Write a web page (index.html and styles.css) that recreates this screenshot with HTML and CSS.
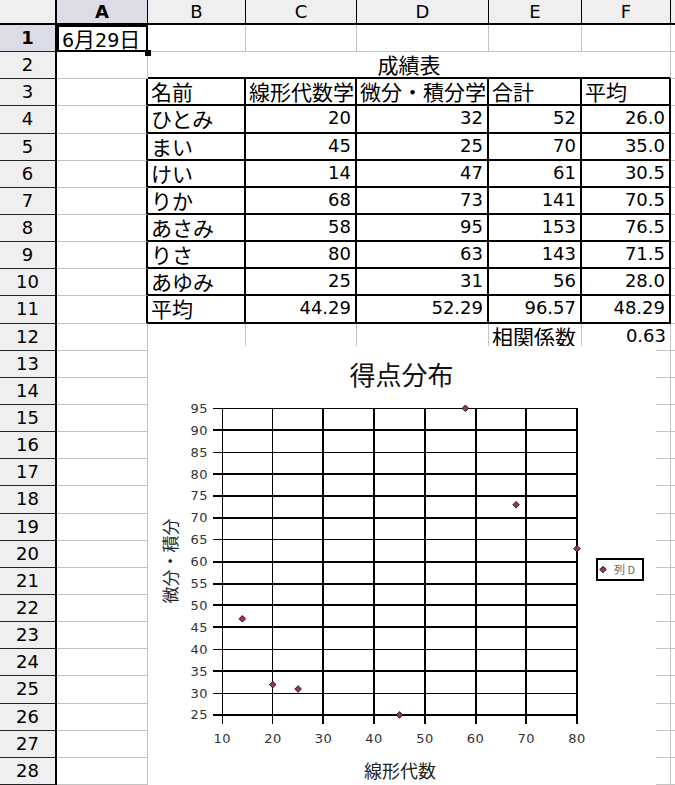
FILE: index.html
```html
<!DOCTYPE html>
<html lang="ja">
<head>
<meta charset="utf-8">
<title>成績表</title>
<link rel="stylesheet" href="styles.css">
</head>
<body>
<div class="sheet">
  <div class="grid">
    <div class="corner"></div>
    <div class="hd hd-sel">A</div><div class="hd">B</div><div class="hd">C</div><div class="hd">D</div><div class="hd">E</div><div class="hd">F</div><div class="hd hd-last"></div>

    <div class="rh rh-sel">1</div>
    <div class="c sel"><span class="n1">6</span><span class="jp">月</span><span class="n1">29</span><span class="jp">日</span></div>
    <div class="c"></div><div class="c"></div><div class="c"></div><div class="c"></div><div class="c"></div><div class="c g"></div>

    <div class="rh">2</div>
    <div class="c"></div>
    <div class="c merged jp">成績表</div>
    <div class="c g"></div>

    <div class="rh">3</div>
    <div class="c tl"></div>
    <div class="c t jp">名前</div><div class="c t jp">線形代数学</div><div class="c t jp">微分・積分学</div><div class="c t jp">合計</div><div class="c t jp">平均</div>
    <div class="c g"></div>

    <div class="rh">4</div>
    <div class="c tl"></div>
    <div class="c t jp">ひとみ</div><div class="c t n">20</div><div class="c t n">32</div><div class="c t n">52</div><div class="c t n">26.0</div>
    <div class="c g"></div>

    <div class="rh">5</div>
    <div class="c tl"></div>
    <div class="c t jp">まい</div><div class="c t n">45</div><div class="c t n">25</div><div class="c t n">70</div><div class="c t n">35.0</div>
    <div class="c g"></div>

    <div class="rh">6</div>
    <div class="c tl"></div>
    <div class="c t jp">けい</div><div class="c t n">14</div><div class="c t n">47</div><div class="c t n">61</div><div class="c t n">30.5</div>
    <div class="c g"></div>

    <div class="rh">7</div>
    <div class="c tl"></div>
    <div class="c t jp">りか</div><div class="c t n">68</div><div class="c t n">73</div><div class="c t n">141</div><div class="c t n">70.5</div>
    <div class="c g"></div>

    <div class="rh">8</div>
    <div class="c tl"></div>
    <div class="c t jp">あさみ</div><div class="c t n">58</div><div class="c t n">95</div><div class="c t n">153</div><div class="c t n">76.5</div>
    <div class="c g"></div>

    <div class="rh">9</div>
    <div class="c tl"></div>
    <div class="c t jp">りさ</div><div class="c t n">80</div><div class="c t n">63</div><div class="c t n">143</div><div class="c t n">71.5</div>
    <div class="c g"></div>

    <div class="rh">10</div>
    <div class="c tl"></div>
    <div class="c t jp">あゆみ</div><div class="c t n">25</div><div class="c t n">31</div><div class="c t n">56</div><div class="c t n">28.0</div>
    <div class="c g"></div>

    <div class="rh">11</div>
    <div class="c tl"></div>
    <div class="c t jp">平均</div><div class="c t n">44.29</div><div class="c t n">52.29</div><div class="c t n">96.57</div><div class="c t n">48.29</div>
    <div class="c g"></div>

    <div class="rh">12</div>
    <div class="c"></div>
    <div class="c"></div><div class="c"></div><div class="c"></div><div class="c jp">相関係数</div><div class="c n">0.63</div>
    <div class="c g"></div>

    <div class="rh">13</div><div class="c"></div><div class="c"></div><div class="c"></div><div class="c"></div><div class="c"></div><div class="c"></div><div class="c g"></div>
    <div class="rh">14</div><div class="c"></div><div class="c"></div><div class="c"></div><div class="c"></div><div class="c"></div><div class="c"></div><div class="c g"></div>
    <div class="rh">15</div><div class="c"></div><div class="c"></div><div class="c"></div><div class="c"></div><div class="c"></div><div class="c"></div><div class="c g"></div>
    <div class="rh">16</div><div class="c"></div><div class="c"></div><div class="c"></div><div class="c"></div><div class="c"></div><div class="c"></div><div class="c g"></div>
    <div class="rh">17</div><div class="c"></div><div class="c"></div><div class="c"></div><div class="c"></div><div class="c"></div><div class="c"></div><div class="c g"></div>
    <div class="rh">18</div><div class="c"></div><div class="c"></div><div class="c"></div><div class="c"></div><div class="c"></div><div class="c"></div><div class="c g"></div>
    <div class="rh">19</div><div class="c"></div><div class="c"></div><div class="c"></div><div class="c"></div><div class="c"></div><div class="c"></div><div class="c g"></div>
    <div class="rh">20</div><div class="c"></div><div class="c"></div><div class="c"></div><div class="c"></div><div class="c"></div><div class="c"></div><div class="c g"></div>
    <div class="rh">21</div><div class="c"></div><div class="c"></div><div class="c"></div><div class="c"></div><div class="c"></div><div class="c"></div><div class="c g"></div>
    <div class="rh">22</div><div class="c"></div><div class="c"></div><div class="c"></div><div class="c"></div><div class="c"></div><div class="c"></div><div class="c g"></div>
    <div class="rh">23</div><div class="c"></div><div class="c"></div><div class="c"></div><div class="c"></div><div class="c"></div><div class="c"></div><div class="c g"></div>
    <div class="rh">24</div><div class="c"></div><div class="c"></div><div class="c"></div><div class="c"></div><div class="c"></div><div class="c"></div><div class="c g"></div>
    <div class="rh">25</div><div class="c"></div><div class="c"></div><div class="c"></div><div class="c"></div><div class="c"></div><div class="c"></div><div class="c g"></div>
    <div class="rh">26</div><div class="c"></div><div class="c"></div><div class="c"></div><div class="c"></div><div class="c"></div><div class="c"></div><div class="c g"></div>
    <div class="rh">27</div><div class="c"></div><div class="c"></div><div class="c"></div><div class="c"></div><div class="c"></div><div class="c"></div><div class="c g"></div>
    <div class="rh">28</div><div class="c"></div><div class="c"></div><div class="c"></div><div class="c"></div><div class="c"></div><div class="c"></div><div class="c g"></div>
  </div>

  <div class="chart">
    <svg class="chart-svg" viewBox="148 346 508 439" width="508" height="439" xmlns="http://www.w3.org/2000/svg">
      <text class="ch-title" x="401.5" y="385" text-anchor="middle">得点分布</text>
      <g stroke="#000" fill="none">
        <line x1="213" y1="408.5" x2="578" y2="408.5" stroke-width="1"/>
        <line x1="213" y1="430" x2="578" y2="430" stroke-width="2"/>
        <line x1="213" y1="452.5" x2="578" y2="452.5" stroke-width="1"/>
        <line x1="213" y1="474" x2="578" y2="474" stroke-width="2"/>
        <line x1="213" y1="496" x2="578" y2="496" stroke-width="2"/>
        <line x1="213" y1="518" x2="578" y2="518" stroke-width="2"/>
        <line x1="213" y1="539.5" x2="578" y2="539.5" stroke-width="1"/>
        <line x1="213" y1="562" x2="578" y2="562" stroke-width="2"/>
        <line x1="213" y1="584" x2="578" y2="584" stroke-width="2"/>
        <line x1="213" y1="605" x2="578" y2="605" stroke-width="2"/>
        <line x1="213" y1="627" x2="578" y2="627" stroke-width="2"/>
        <line x1="213" y1="649.5" x2="578" y2="649.5" stroke-width="1"/>
        <line x1="213" y1="671" x2="578" y2="671" stroke-width="2"/>
        <line x1="213" y1="693.5" x2="578" y2="693.5" stroke-width="1"/>
        <line x1="213" y1="715" x2="578" y2="715" stroke-width="2"/>

        <line x1="222.5" y1="408" x2="222.5" y2="724" stroke-width="1"/>
        <line x1="272.5" y1="408" x2="272.5" y2="724" stroke-width="1"/>
        <line x1="323" y1="408" x2="323" y2="724" stroke-width="2"/>
        <line x1="374" y1="408" x2="374" y2="724" stroke-width="2"/>
        <line x1="425" y1="408" x2="425" y2="724" stroke-width="2"/>
        <line x1="476" y1="408" x2="476" y2="724" stroke-width="2"/>
        <line x1="526" y1="408" x2="526" y2="724" stroke-width="2"/>
        <line x1="577" y1="408" x2="577" y2="724" stroke-width="2"/>
      </g>
      <g class="ax-y" text-anchor="end">
        <text x="208" y="412.8">95</text>
        <text x="208" y="434.7">90</text>
        <text x="208" y="456.6">85</text>
        <text x="208" y="478.5">80</text>
        <text x="208" y="500.4">75</text>
        <text x="208" y="522.3">70</text>
        <text x="208" y="544.2">65</text>
        <text x="208" y="566.1">60</text>
        <text x="208" y="588">55</text>
        <text x="208" y="609.9">50</text>
        <text x="208" y="631.8">45</text>
        <text x="208" y="653.7">40</text>
        <text x="208" y="675.6">35</text>
        <text x="208" y="697.5">30</text>
        <text x="208" y="719.4">25</text>
      </g>
      <g class="ax-x" text-anchor="middle">
        <text x="222.3" y="742.5">10</text>
        <text x="273" y="742.5">20</text>
        <text x="323.4" y="742.5">30</text>
        <text x="374.1" y="742.5">40</text>
        <text x="424.9" y="742.5">50</text>
        <text x="475.6" y="742.5">60</text>
        <text x="526.3" y="742.5">70</text>
        <text x="577" y="742.5">80</text>
      </g>
      <text class="ax-title" x="400" y="778" text-anchor="middle">線形代数</text>
      <text class="ax-title-y" x="0" y="0" text-anchor="middle" transform="translate(171 561) rotate(-90)" dy="6">微分・積分</text>
      <g class="marks" fill="#993366" stroke="#000" stroke-width="0.8">
        <path d="M272.7 681.3 L276 684.6 L272.7 687.9 L269.4 684.6 Z"/>
        <path d="M399.5 711.6 L402.8 714.9 L399.5 718.2 L396.2 714.9 Z"/>
        <path d="M242.3 615.5 L245.6 618.8 L242.3 622.1 L239 618.8 Z"/>
        <path d="M516.1 501.5 L519.4 504.8 L516.1 508.1 L512.8 504.8 Z"/>
        <path d="M465.4 405 L468.7 408.3 L465.4 411.6 L462.1 408.3 Z"/>
        <path d="M577 545.4 L580.3 548.7 L577 552 L573.7 548.7 Z"/>
        <path d="M298.1 685.7 L301.4 689 L298.1 692.3 L294.8 689 Z"/>
      </g>
      <rect x="597" y="559" width="46" height="21" fill="#fff" stroke="#000" stroke-width="2"/>
      <path d="M603 566.2 L606.3 569.5 L603 572.8 L599.7 569.5 Z" fill="#993366" stroke="#000" stroke-width="0.8"/>
      <text class="legend" x="614" y="574">列 D</text>
    </svg>
  </div>
</div>
</body>
</html>
```

FILE: styles.css
```css
html, body {
  margin: 0;
  padding: 0;
  background: #fff;
}

.sheet {
  position: relative;
  width: 675px;
  height: 785px;
  overflow: hidden;
  font-family: "DejaVu Sans", "Noto Sans CJK JP", sans-serif;
  color: #000;
}

.grid {
  display: grid;
  grid-template-columns: 57px 91px 98px 111px 132px 93px 89px 4px;
  grid-template-rows: 25px repeat(28, 27.15px);
}

.grid > div {
  box-sizing: border-box;
  white-space: nowrap;
}

.corner {
  background: #efefef;
  border-right: 2px solid #000;
  border-bottom: 2px solid #000;
}

.hd {
  background: #efefef;
  border-right: 1px solid #000;
  border-bottom: 2px solid #000;
  font-size: 18px;
  line-height: 23px;
  text-align: center;
}

.hd-sel {
  background: #dcdce6;
  font-weight: bold;
}

.hd-last {
  border-right: none;
}

.rh {
  background: #efefef;
  border-right: 2px solid #000;
  border-bottom: 1px solid #222;
  font-size: 18px;
  line-height: 25px;
  text-align: center;
}

.rh-sel {
  background: #dcdce6;
  font-weight: bold;
}

.c {
  background: #fff;
  border-right: 1px solid #c4c4c4;
  border-bottom: 1px solid #c4c4c4;
  font-size: 18px;
  line-height: 24px;
  padding: 0 3px;
}

.g {
  border-right: none;
  padding: 0;
}

.jp {
  font-family: "Noto Sans CJK JP", sans-serif;
  font-size: 21px;
}

.n1 {
  font-size: 19px;
}

.n {
  text-align: right;
  padding-right: 4px;
}

.merged {
  grid-column: span 5;
  text-align: center;
  border-bottom: 2px solid #000;
}

.tl {
  border-right: 2px solid #000;
}

.t {
  border-right: 2px solid #000;
  border-bottom: 2px solid #000;
}

.sel {
  position: relative;
  z-index: 1;
  border: 2px solid #000;
  padding: 0 2px 0 3px;
  line-height: 22px;
}

.sel .jp {
  line-height: 22px;
}

.sel::after {
  content: "";
  position: absolute;
  right: -5px;
  bottom: -6px;
  width: 6px;
  height: 6px;
  background: #000;
}

.chart {
  position: absolute;
  left: 148px;
  top: 346px;
  width: 508px;
  height: 439px;
  background: #fff;
}

.chart-svg {
  display: block;
}

.ch-title {
  font-family: "Noto Sans CJK JP", sans-serif;
  font-size: 26px;
  fill: #111;
}

.ax-y text, .ax-x text {
  font-family: "DejaVu Sans", sans-serif;
  font-size: 13px;
  fill: #333;
  letter-spacing: 0.5px;
}

.ax-title, .ax-title-y {
  font-family: "Noto Sans CJK JP", sans-serif;
  font-size: 18px;
  fill: #222;
}

.ax-title-y {
  font-size: 17px;
}

.legend {
  font-family: "Noto Sans CJK JP", "DejaVu Sans", sans-serif;
  font-size: 11px;
  fill: #666;
}
```
